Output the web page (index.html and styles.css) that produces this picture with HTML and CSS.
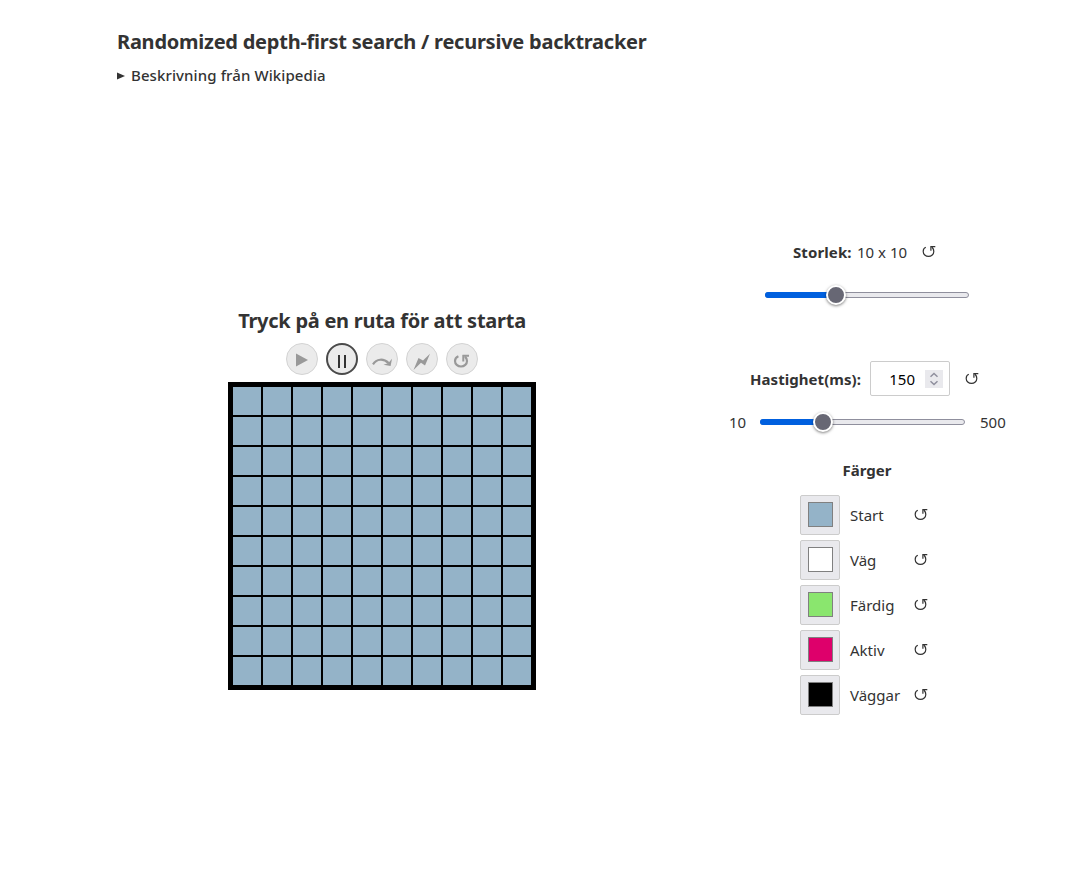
FILE: index.html
```html
<!DOCTYPE html>
<html lang="sv">
<head>
<meta charset="utf-8">
<title>Randomized depth-first search</title>
<link rel="stylesheet" href="styles.css">
</head>
<body>
<svg class="defs" width="0" height="0">
  <symbol id="reset" viewBox="0 0 14 14">
    <path d="M3.8 2.3C2 3 1.200 4.700 1.200 6.500a5.300 4.900 0 0 0 10.600 0c0-1.900-.6-3.200-1.900-4.500" fill="none" stroke="currentColor" stroke-width="1.200"/>
    <path d="M8.300 1.600H13.300M8.900 1.600V5.800" fill="none" stroke="currentColor" stroke-width="1.200"/>
  </symbol>
</svg>
<header class="intro">
  <h1 class="title">Randomized depth-first search / recursive backtracker</h1>
  <div class="summary"><svg class="marker" viewBox="0 0 8 8"><path d="M0 .5 8 4 0 7.5z"/></svg><span>Beskrivning från Wikipedia</span></div>
</header>
<main class="layout">
  <section class="maze">
    <h2 class="prompt">Tryck på en ruta för att starta</h2>
    <div class="controls">
      <button class="control"><svg viewBox="0 0 32 32"><path d="M10 10.500 22 17 10 23.500z" fill="currentColor"/></svg></button>
      <button class="control active"><svg viewBox="0 0 32 32"><path d="M13 12V25M19 12V25" stroke="currentColor" stroke-width="2"/></svg></button>
      <button class="control"><svg viewBox="0 0 32 32"><path d="M7 21.300c3.500-5.600 10.500-6.200 15.600-1.200" fill="none" stroke="currentColor" stroke-width="2.200"/><path d="M26 15.800 24.600 23 17.500 21.800 22.200 20.200z" fill="currentColor"/></svg></button>
      <button class="control"><svg viewBox="0 0 32 32"><path d="M7.500 27 12.500 15 17 17.500 24 10.800 19 22.500 15 19.800z" fill="currentColor"/></svg></button>
      <button class="control"><svg viewBox="0 0 32 32"><path d="M12.400 13.200C10 14.200 9 15.900 9 18a6 5.500 0 0 0 12 0c0-2-.7-3.200-2-4.400" fill="none" stroke="currentColor" stroke-width="2.200"/><path d="M16.500 12.800H23M17.300 12V18.600" fill="none" stroke="currentColor" stroke-width="2"/></svg></button>
    </div>
    <div class="grid" id="grid"></div>
  </section>
  <aside class="settings">
    <div class="row size-row"><b class="t-size">Storlek:</b><span class="size-value">10 x 10</span><svg class="reset"><use href="#reset"/></svg></div>
    <div class="slider size-slider"><div class="fill"></div><div class="thumb"></div></div>
    <div class="row speed-row"><b class="t-speed">Hastighet(ms):</b>
      <div class="number"><span>150</span><svg class="spin" viewBox="0 0 18 18"><path d="M5.500 6.800 9 3.500 12.500 6.800M5.500 11.200 9 14.500 12.500 11.200" fill="none" stroke="#8f8f9d" stroke-width="1.500"/></svg></div>
      <svg class="reset"><use href="#reset"/></svg></div>
    <div class="row range-row"><span class="limit">10</span><div class="slider speed-slider"><div class="fill"></div><div class="thumb"></div></div><span class="limit">500</span></div>
    <h3 class="colors-title">Färger</h3>
    <div class="colors">
      <div class="color"><div class="well"><div class="swatch start"></div></div><span class="name">Start</span><svg class="reset"><use href="#reset"/></svg></div>
      <div class="color"><div class="well"><div class="swatch path"></div></div><span class="name">Väg</span><svg class="reset"><use href="#reset"/></svg></div>
      <div class="color"><div class="well"><div class="swatch done"></div></div><span class="name">Färdig</span><svg class="reset"><use href="#reset"/></svg></div>
      <div class="color"><div class="well"><div class="swatch current"></div></div><span class="name">Aktiv</span><svg class="reset"><use href="#reset"/></svg></div>
      <div class="color"><div class="well"><div class="swatch wall"></div></div><span class="name">Väggar</span><svg class="reset"><use href="#reset"/></svg></div>
    </div>
  </aside>
</main>
<script src="script.js"></script>
</body>
</html>
```
FILE: styles.css
```css
* { box-sizing: border-box; }
body { margin: 0; padding: 27px 75px 0 117px; background: #fff; color: #333; font: 15px/24px "Noto Sans", sans-serif; }
.defs { display: none; }
h1, h2, h3 { margin: 0; white-space: nowrap; }
.intro { height: 203px; }
.title { font-size: 20px; line-height: 30px; letter-spacing: -.24px; }
.summary { display: flex; align-items: center; gap: 6px; margin-top: 6px; height: 24px; font-weight: 500; letter-spacing: .1px; }
.marker { width: 8px; height: 8px; margin-top: 1px; fill: #333; }
.layout { display: flex; justify-content: space-between; }
.maze { width: 530px; padding-top: 76px; display: flex; flex-direction: column; align-items: center; }
.prompt { font-size: 20px; line-height: 30px; height: 37px; letter-spacing: -.26px; }
.controls { display: flex; gap: 8px; margin-bottom: 7px; }
.control { width: 32px; height: 32px; padding: 0; border: 1px solid #d3d3d3; border-radius: 50%; background: #ebebeb; color: #999; }
.control svg { display: block; width: 32px; height: 32px; margin: -1px; }
.control.active { border: 2px solid #4a4a4a; color: #333; }
.control.active svg { margin: -2px; }
.grid { display: grid; grid-template-columns: repeat(10, 30px); border: 4px solid #000; }
.cell { height: 30px; border: 1px solid #000; background: #94b3c8; }
.settings { width: 280px; padding-top: 7px; }
.row { display: flex; align-items: center; white-space: nowrap; }
.reset { flex: none; width: 14px; height: 14px; color: #333; }
.size-row { height: 30px; padding-left: 66px; }
.t-size { width: 64px; letter-spacing: .1px; }
.size-value { width: 65px; }
.slider { position: relative; flex: none; width: 205px; height: 6px; border: 1px solid #8f8f9d; border-radius: 3px; background: #e9e9ed; }
.fill { height: 6px; margin: -1px; border-radius: 3px; background: #0060df; }
.thumb { position: absolute; top: -8px; width: 20px; height: 20px; border: 2px solid #fff; border-radius: 50%; background: #676774; box-shadow: 0 1px 3px rgba(0,0,0,.5); }
.size-slider { width: 204px; margin: 25px 0 63px 38px; }
.size-slider .fill { width: 70px; }
.size-slider .thumb { left: 60px; }
.speed-row { height: 35px; padding-left: 23px; }
.t-speed { width: 120px; letter-spacing: .05px; }
.number { width: 80px; height: 35px; border: 1px solid #ccc; border-radius: 2px; display: flex; align-items: center; justify-content: flex-end; padding-right: 6px; gap: 10px; margin-right: 15px; color: #000; }
.spin { width: 18px; height: 18px; background: #e9e9ed; }
.range-row { height: 30px; margin-top: 11px; padding-left: 2px; }
.limit { flex: none; width: 31px; }
.limit:last-child { width: 27px; margin-left: 15px; }
.speed-slider .fill { width: 60px; }
.speed-slider .thumb { left: 52px; }
.colors-title { height: 24px; margin-top: 21px; font-size: 15px; line-height: 24px; text-align: center; }
.colors { display: grid; gap: 5px; padding: 13px 0 0 73px; }
.color { height: 40px; display: flex; align-items: center; }
.well { width: 40px; height: 40px; padding: 6px 7px; border: 1px solid #ccc; border-radius: 2px; background: #e9e9ed; }
.swatch { width: 25px; height: 25px; border: 1px solid #808080; }
.name { width: 64px; margin-left: 10px; }
.start { background: #94b3c8; }
.path { background: #fff; }
.done { background: #8ae66e; }
.current { background: #de006b; }
.wall { background: #000; }
```
FILE: script.js
```js
const grid = document.getElementById("grid");
for (let i = 0; i < 100; i++) {
  const cell = document.createElement("div");
  cell.className = "cell";
  grid.appendChild(cell);
}
```
